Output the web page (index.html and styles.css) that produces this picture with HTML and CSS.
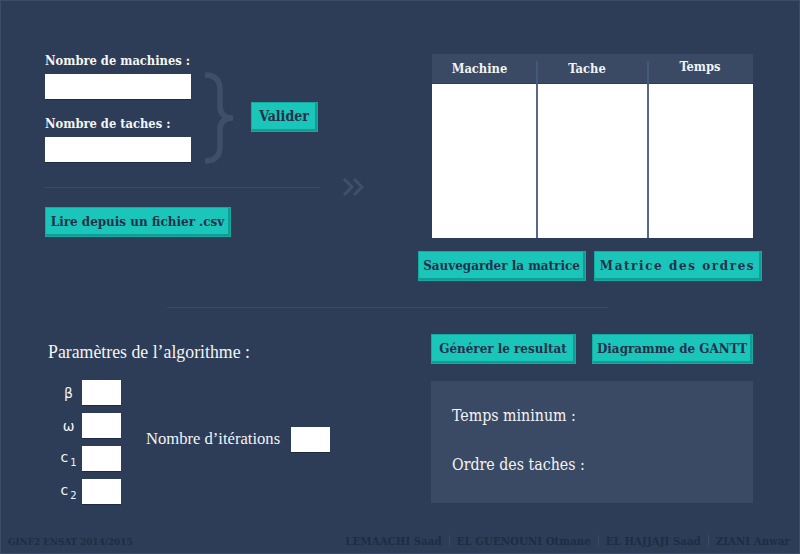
FILE: index.html
```html
<!DOCTYPE html>
<html lang="fr">
<head>
<meta charset="utf-8">
<title>Ordonnancement</title>
<link rel="stylesheet" href="styles.css">
</head>
<body>
<div class="page">
  <section class="top">
    <div class="left">
      <div class="form-row">
        <div class="fields">
          <label class="lbl">Nombre de machines :</label>
          <input class="inp inp-wide" type="text">
          <label class="lbl lbl-2">Nombre de taches :</label>
          <input class="inp inp-wide" type="text">
        </div>
        <svg class="brace" width="32" height="92" viewBox="0 0 32 92">
          <path d="M2 3 Q17 3 17 18 L17 34 Q17 46 30 46 Q17 46 17 58 L17 74 Q17 89 2 89" fill="none" stroke="#3e4f6a" stroke-width="5.5" stroke-linecap="butt"/>
        </svg>
        <button class="btn btn-valider">Valider</button>
      </div>
      <div class="div-row">
        <span class="rule"></span>
        <svg class="chev" width="24" height="20" viewBox="0 0 24 20">
          <path d="M2 2 L10 10 L2 18 M12 2 L20 10 L12 18" fill="none" stroke="#3f506c" stroke-width="3"/>
        </svg>
      </div>
      <button class="btn btn-csv">Lire depuis un fichier .csv</button>
    </div>
    <div class="right">
      <div class="matrix">
        <div class="mrow mhead">
          <div class="mcell mcell-l">Machine</div>
          <div class="mcell mcell-l">Tache</div>
          <div class="mcell mcell-up">Temps</div>
        </div>
        <div class="mrow mbody">
          <div class="mcell"></div>
          <div class="mcell"></div>
          <div class="mcell"></div>
        </div>
      </div>
      <div class="btn-row">
        <button class="btn btn-half">Sauvegarder la matrice</button>
        <button class="btn btn-half btn-spaced">Matrice des ordres</button>
      </div>
    </div>
  </section>

  <div class="mid-rule"></div>

  <section class="bottom">
    <div class="params">
      <h2 class="params-title">Paramètres de l’algorithme :</h2>
      <div class="params-body">
        <div class="param-grid">
          <span class="sym">β</span><input class="inp inp-sm" type="text">
          <span class="sym">ω</span><input class="inp inp-sm" type="text">
          <span class="sym">c<sub>1</sub></span><input class="inp inp-sm" type="text">
          <span class="sym">c<sub>2</sub></span><input class="inp inp-sm" type="text">
        </div>
        <div class="iter">
          <span class="iter-lbl">Nombre d’itérations</span>
          <input class="inp inp-sm" type="text">
        </div>
      </div>
    </div>
    <div class="results">
      <div class="res-btns">
        <button class="btn btn-gen">Générer le resultat</button>
        <button class="btn btn-gantt">Diagramme de GANTT</button>
      </div>
      <div class="res-box">
        <p class="res-line">Temps mininum :</p>
        <p class="res-line">Ordre des taches :</p>
      </div>
    </div>
  </section>

  <footer class="foot">
    <span class="foot-left">GINF2 ENSAT 2014/2015</span>
    <span class="foot-names">
      <span class="name">LEMAACHI Saad</span>
      <span class="name">EL GUENOUNI Otmane</span>
      <span class="name">EL HAJJAJI Saad</span>
      <span class="name">ZIANI Anwar</span>
    </span>
  </footer>
</div>
</body>
</html>
```

FILE: styles.css
```css
* { box-sizing: border-box; }

html, body {
  margin: 0;
  padding: 0;
  background: #2d3d57;
}

.page {
  width: 800px;
  height: 554px;
  border: 1px solid #3b4c67;
  background: #2d3d57;
  display: flex;
  flex-direction: column;
  font-family: "DejaVu Serif Condensed", "DejaVu Serif", serif;
  color: #f3f4f6;
  overflow: hidden;
}

/* ---------- top ---------- */
.top {
  display: flex;
  padding: 50px 0 0 44px;
}

.left {
  width: 320px;
  display: flex;
  flex-direction: column;
  align-items: flex-start;
}

.form-row {
  display: flex;
  align-items: flex-start;
}

.fields {
  width: 146px;
  display: flex;
  flex-direction: column;
}

.lbl {
  font-size: 12.8px;
  font-weight: bold;
  line-height: 20px;
  margin-bottom: 3px;
  white-space: nowrap;
  color: #f5f5f5;
}

.lbl-2 { margin-top: 15px; }

.inp {
  display: block;
  border: none;
  background: #ffffff;
  height: 25px;
  box-shadow: 0 1px 0 #1f2b42;
  outline: none;
  padding: 0;
}

.inp-wide { width: 146px; }
.inp-sm { width: 39px; }

.brace {
  margin: 21px 0 0 12px;
  flex: none;
}

.btn {
  font-family: "DejaVu Serif Condensed", "DejaVu Serif", serif;
  font-weight: bold;
  font-size: 13.3px;
  color: #25304a;
  background: #1ac5ba;
  border: 1px solid #14aaa0;
  box-shadow: inset -2px -2px 0 #119d94;
  height: 30px;
  padding: 0 3px 2px 2px;
  cursor: pointer;
  white-space: nowrap;
}

.btn-valider {
  margin: 51px 0 0 16px;
  width: 67px;
  font-size: 14px;
}

.div-row {
  display: flex;
  align-items: center;
  height: 20px;
  margin-top: 13px;
}

.rule {
  width: 275px;
  height: 1px;
  background: #3b4c66;
}

.chev { margin-left: 22px; }

.btn-csv {
  margin-top: 10px;
  width: 186px;
}

.right {
  margin: 3px 0 0 53px;
  width: 344px;
}

.matrix {
  margin-left: 14px;
  width: 321px;
}

.mrow {
  display: grid;
  grid-template-columns: 104px 111px 106px;
}

.mhead {
  background: #3a4a64;
  height: 30px;
  border-bottom: 1px solid #2d3d57;
}

.mhead .mcell {
  font-size: 12.8px;
  font-weight: bold;
  text-align: center;
  line-height: 30px;
  position: relative;
  color: #f2f3f5;
}

.mhead .mcell-l { padding-right: 9px; }

.mhead .mcell + .mcell::before {
  content: "";
  position: absolute;
  left: 0;
  top: 7px;
  bottom: 0;
  width: 2px;
  background: #46587a;
}

.mhead .mcell-up { line-height: 26px; }

.mbody {
  height: 154px;
  background: #ffffff;
}

.mbody .mcell + .mcell {
  border-left: 2px solid #56688a;
}

.btn-row {
  display: flex;
  gap: 8px;
  margin-top: 13px;
}

.btn-half { width: 168px; }

.btn-spaced { letter-spacing: 1.6px; }

/* ---------- middle rule ---------- */
.mid-rule {
  margin: 26px 0 0 166px;
  width: 441px;
  height: 1px;
  background: #3b4c66;
}

/* ---------- bottom ---------- */
.bottom {
  display: flex;
  padding: 26px 0 0 47px;
}

.params {
  width: 383px;
}

.params-title {
  margin: 8px 0 0 0;
  font-family: "Liberation Serif", serif;
  font-weight: normal;
  font-size: 17.8px;
  line-height: 20px;
  color: #f3f4f6;
}

.params-body {
  display: flex;
  align-items: center;
  margin-top: 18px;
}

.param-grid {
  display: grid;
  grid-template-columns: 30px 39px;
  column-gap: 4px;
  row-gap: 8px;
  align-items: center;
}

.sym {
  font-family: "DejaVu Sans", sans-serif;
  font-size: 14px;
  text-align: center;
  padding-left: 11px;
  color: #f3f4f6;
}

.sym sub {
  font-size: 10px;
  vertical-align: -4px;
  margin-left: 2px;
}

.iter {
  display: flex;
  align-items: center;
  gap: 11px;
  margin: 0 0 6px 25px;
}

.iter-lbl {
  font-family: "Liberation Serif", serif;
  font-size: 16.6px;
  color: #f3f4f6;
}

.results {
  width: 322px;
}

.res-btns {
  display: flex;
  gap: 16px;
}

.btn-gen { width: 145px; }
.btn-gantt { width: 161px; }

.res-box {
  margin-top: 17px;
  height: 122px;
  background: #3a4a64;
  padding: 25px 0 0 21px;
}

.res-line {
  margin: 0 0 29px 0;
  font-size: 15.8px;
  line-height: 20px;
  color: #f3f4f6;
}

/* ---------- footer ---------- */
.foot {
  margin-top: auto;
  display: flex;
  justify-content: space-between;
  align-items: center;
  padding: 0 9px 2px 7px;
  height: 22px;
  font-weight: bold;
  color: #1f2c43;
}

.foot-left {
  font-size: 9.8px;
}

.foot-names {
  display: flex;
  align-items: center;
  font-size: 11.4px;
}

.name {
  padding: 0 7px;
  line-height: 12px;
}

.name + .name { border-left: 1px solid #3a4a63; }
.name:last-child { padding-right: 0; }
```
